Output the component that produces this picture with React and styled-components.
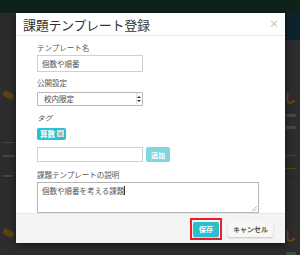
import React from "react";
import styled, { createGlobalStyle } from "styled-components";

const GlobalStyle = createGlobalStyle`
  html, body {
    margin: 0;
    padding: 0;
    width: 300px;
    height: 255px;
    overflow: hidden;
    background: #2c2c2c;
    font-family: "Noto Sans CJK JP", "Noto Sans", sans-serif;
  }
  * { box-sizing: border-box; }
`;

const Page = styled.div`
  position: relative;
  width: 300px;
  height: 255px;
  overflow: hidden;
  background: #2d2d2d;
`;

const TopBar = styled.div`
  height: 13px;
  background: #0f2219;
`;

const SubBar = styled.div`
  height: 27px;
  display: flex;
  justify-content: flex-end;
  background: #2b2b2b;
`;

const SubBarTab = styled.div`
  width: 22px;
  background: #0e2330;
`;

const Feed = styled.div`
  display: flex;
  flex-direction: column;
`;

const Card = styled.div`
  height: 138px;
  display: flex;
  justify-content: space-between;
  padding: 52px 4px 0 3px;
  border-bottom: 1px solid #262626;
`;

const CardSide = styled.div`
  display: flex;
  flex-direction: column;
  gap: 6px;
  align-items: ${(p) => (p.$right ? "flex-end" : "flex-start")};
`;

const Stamp = styled.div`
  width: 11px;
  height: 9px;
  border-radius: 2px;
  background: #5e4210;
  transform: rotate(25deg);
`;

const Glyph = styled.div`
  color: #6a4a16;
  font-size: 12px;
  font-weight: bold;
  line-height: 1;
`;

const Line = styled.div`
  width: ${(p) => p.$w}px;
  height: 3px;
  background: #474747;
  margin-top: ${(p) => p.$mt || 0}px;
`;

const OutlineBox = styled.div`
  width: 14px;
  height: 14px;
  border: 1px solid #5a4215;
  border-right: none;
  margin-top: 20px;
`;

const Modal = styled.div`
  position: absolute;
  left: 16px;
  top: 13px;
  width: 269px;
  height: 230px;
  background: #fff;
  display: flex;
  flex-direction: column;
  box-shadow: 0 2px 8px rgba(0, 0, 0, 0.5);
`;

const Header = styled.div`
  height: 23px;
  border-bottom: 1px solid #e8e8e8;
  display: flex;
  align-items: center;
  justify-content: space-between;
  padding: 0 6px 0 7px;
`;

const Title = styled.div`
  font-size: 13px;
  color: #333;
  line-height: 1;
  letter-spacing: -0.3px;
`;

const Close = styled.div`
  font-size: 10px;
  font-weight: bold;
  color: #c8c8c8;
  line-height: 1;
`;

const Body = styled.div`
  height: 177px;
  overflow: hidden;
  padding: 7px 0 0 21px;
  display: flex;
  flex-direction: column;
`;

const Label = styled.div`
  font-size: 7.5px;
  line-height: 10px;
  height: 10px;
  color: #555;
  margin-top: ${(p) => p.$mt || 0}px;
  font-style: ${(p) => (p.$italic ? "italic" : "normal")};
`;

const TextInput = styled.div`
  width: ${(p) => p.$w || 106}px;
  height: ${(p) => p.$h || 17}px;
  margin-top: ${(p) => p.$mt || 0}px;
  border: 1px solid #d0d0d0;
  padding-left: 4px;
  display: flex;
  align-items: center;
  font-size: 7.5px;
  color: #555;
`;

const Select = styled.div`
  width: 106px;
  height: 14px;
  margin-top: 4px;
  border: 1px solid #b8b8b8;
  border-radius: 1px;
  display: flex;
  align-items: center;
  justify-content: space-between;
  padding: 0 1px 0 6px;
  font-size: 7.5px;
  color: #444;
`;

const SelectArrow = styled.div`
  width: 5px;
  height: 11px;
  border-left: 1px solid #ddd;
  display: flex;
  align-items: center;
  justify-content: center;
`;

const Chip = styled.div`
  margin-top: 5px;
  align-self: flex-start;
  height: 13px;
  padding: 0 2px 0 3px;
  background: #29c1d1;
  border-radius: 2px;
  display: flex;
  align-items: center;
  gap: 2px;
  color: #fff;
  font-size: 7.5px;
  font-weight: bold;
`;

const ChipRemove = styled.div`
  width: 7px;
  height: 7px;
  background: #dcdcdc;
  color: #8a8a8a;
  font-size: 6px;
  line-height: 7px;
  text-align: center;
  font-weight: bold;
`;

const Row = styled.div`
  margin-top: 7px;
  display: flex;
  gap: 3px;
`;

const AddButton = styled.div`
  width: 24px;
  height: 15px;
  background: #7fd6df;
  border-radius: 2px;
  color: #fff;
  font-size: 7px;
  font-weight: bold;
  display: flex;
  align-items: center;
  justify-content: center;
`;

const TextArea = styled.div`
  position: relative;
  width: 222px;
  height: 31px;
  margin-top: 2px;
  border: 1px solid #b5b5b5;
  padding: 3px 4px;
  font-size: 7.5px;
  color: #555;
  line-height: 10px;
`;

const Caret = styled.span`
  display: inline-block;
  width: 1px;
  height: 9px;
  background: #333;
  vertical-align: -1px;
`;

const Grip = styled.svg`
  position: absolute;
  right: 1px;
  bottom: 1px;
`;

const Footer = styled.div`
  height: 30px;
  background: #f4f4f4;
  border-top: 1px solid #e6e6e6;
  display: flex;
  justify-content: flex-end;
  align-items: center;
  padding: 1px 12px 0 0;
  gap: 6px;
`;

const Highlight = styled.div`
  border: 2px solid #ea1f2a;
  padding: 1.5px 1px;
  display: flex;
`;

const Button = styled.div`
  width: ${(p) => p.$w}px;
  height: 15px;
  border-radius: 2px;
  display: flex;
  align-items: center;
  justify-content: center;
  font-size: 7px;
  font-weight: bold;
  background: ${(p) => (p.$primary ? "#2bbfcd" : "#f7f7f7")};
  color: ${(p) => (p.$primary ? "#fff" : "#555")};
  box-shadow: ${(p) =>
    p.$primary ? "0 1px 1px rgba(0,0,0,0.15)" : "0 1px 2px rgba(0,0,0,0.2)"};
`;

const BackgroundCard = () => (
  <Card>
    <CardSide>
      <Stamp />
      <Line $w={12} $mt={38} />
      <Line $w={12} $mt={6} />
      <Line $w={10} $mt={12} />
    </CardSide>
    <CardSide $right>
      <Glyph>↑し</Glyph>
      <Line $w={10} $mt={4} />
      <Line $w={10} $mt={3} />
      <OutlineBox />
    </CardSide>
  </Card>
);

export default function App() {
  return (
    <>
      <GlobalStyle />
      <Page>
        <TopBar />
        <SubBar>
          <SubBarTab />
        </SubBar>
        <Feed>
          <BackgroundCard />
          <BackgroundCard />
        </Feed>

        <Modal>
          <Header>
            <Title>課題テンプレート登録</Title>
            <Close>×</Close>
          </Header>
          <Body>
            <Label>テンプレート名</Label>
            <TextInput $mt={2}>個数や順番</TextInput>

            <Label $mt={6}>公開設定</Label>
            <Select>
              <span>校内限定</span>
              <SelectArrow>
                <svg width="4" height="8" viewBox="0 0 4 8">
                  <path d="M0 3 L2 1 L4 3 Z M0 5 L2 7 L4 5 Z" fill="#333" />
                </svg>
              </SelectArrow>
            </Select>

            <Label $mt={7} $italic>
              タグ
            </Label>
            <Chip>
              算数
              <ChipRemove>×</ChipRemove>
            </Chip>
            <Row>
              <TextInput $h={15} />
              <AddButton>追加</AddButton>
            </Row>

            <Label $mt={8}>課題テンプレートの説明</Label>
            <TextArea>
              個数や順番を考える課題
              <Caret />
              <Grip width="5" height="5" viewBox="0 0 5 5">
                <path d="M5 0 L0 5 M5 2.5 L2.5 5" stroke="#999" strokeWidth="0.7" />
              </Grip>
            </TextArea>
          </Body>
          <Footer>
            <Highlight>
              <Button $primary $w={26}>
                保存
              </Button>
            </Highlight>
            <Button $w={45}>キャンセル</Button>
          </Footer>
        </Modal>
      </Page>
    </>
  );
}
